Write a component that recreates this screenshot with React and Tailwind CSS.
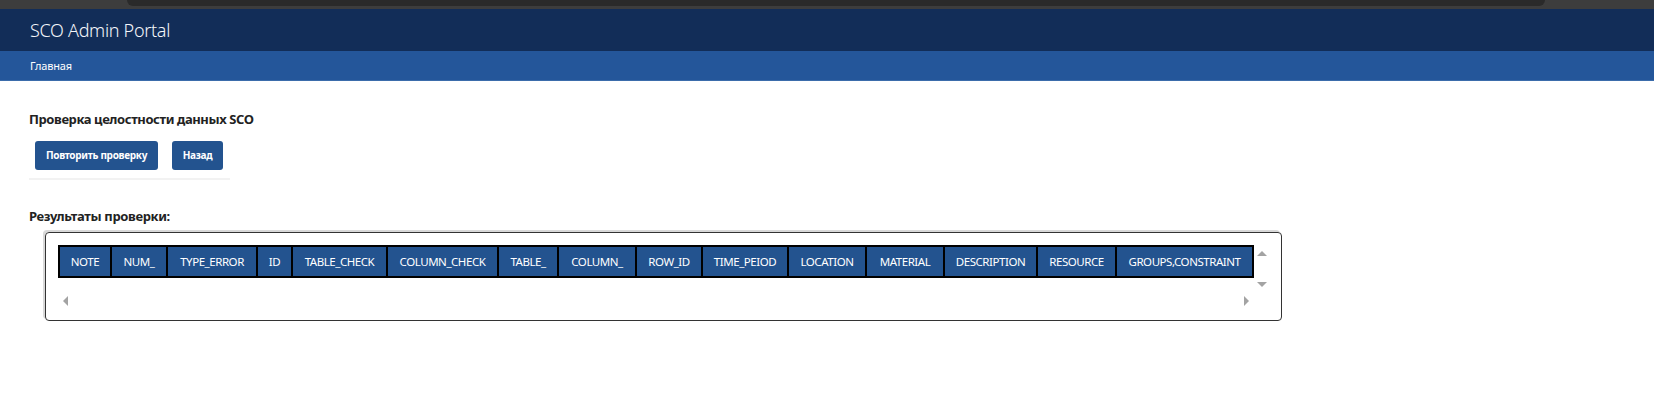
import React from "react";

const cols = [
  ["NOTE", 52],
  ["NUM_", 56],
  ["TYPE_ERROR", 90],
  ["ID", 35],
  ["TABLE_CHECK", 95],
  ["COLUMN_CHECK", 111],
  ["TABLE_", 60],
  ["COLUMN_", 78],
  ["ROW_ID", 66],
  ["TIME_PEIOD", 86],
  ["LOCATION", 78],
  ["MATERIAL", 78],
  ["DESCRIPTION", 93],
  ["RESOURCE", 79],
  ["GROUPS,CONSTRAINT", 137],
];

export default function App() {
  return (
    <div className="w-[1654px] h-[406px] bg-white overflow-hidden" style={{ fontFamily: '"Noto Sans", "Open Sans", sans-serif' }}>
      {/* top strip */}
      <div className="h-[9px] bg-[#3d3d3d] flex">
        <div className="ml-[127px] w-[1418px] h-[6px] bg-[#2a2a2a] rounded-b-md" />
      </div>
      {/* header */}
      <div className="h-[42px] bg-[#122d58] flex items-center pl-[30px]">
        <span className="text-[#f4f6fa] text-[18px] font-light leading-none tracking-[-0.3px]">SCO Admin Portal</span>
      </div>
      <div className="h-[30px] bg-[#24569a] border-b border-[#3b6cab] flex items-center pl-[30px]">
        <span className="text-white text-[11px] leading-none tracking-[-0.2px]">Главная</span>
      </div>

      <div className="pl-[29px] pt-[29px]">
        <h2 className="text-[13px] font-bold text-[#222] leading-[18px] tracking-[-0.4px]">Проверка целостности данных SCO</h2>
        <div className="mt-[13px] w-[201px] pl-[6px] pb-[8px] border-b-2 border-[#f2f2f2] flex gap-[14px]">
          <button className="h-[29px] w-[123px] rounded-[3px] bg-[#23538f] text-white text-[10px] font-bold tracking-[-0.3px]">Повторить проверку</button>
          <button className="h-[29px] w-[51px] rounded-[3px] bg-[#23538f] text-white text-[10px] font-bold tracking-[-0.3px]">Назад</button>
        </div>
        <h3 className="mt-[27px] text-[13px] font-bold text-[#222] leading-[18px] tracking-[-0.35px]">Результаты проверки:</h3>
      </div>

      <div className="ml-[45px] mt-[7px] w-[1237px] h-[89px] border-[1.5px] border-[#333] rounded-[4px] shadow-[-2px_-2px_0_0_#d8d8d8] pt-[12px] pl-[12px]">
        <div className="flex">
          <div className="w-[1196px]">
            <div className="flex h-[33px] border-2 border-r-0 border-black bg-[#23538f]">
              {cols.map(([name, w]) => (
                <div
                  key={name}
                  className="shrink-0 border-r-2 border-black flex items-center justify-center text-white text-[11.5px] tracking-[-0.45px] whitespace-nowrap"
                  style={{ width: w }}
                >
                  {name}
                </div>
              ))}
            </div>
          </div>
          <div className="w-[16px] h-[47px] flex flex-col items-center justify-between pt-[6px] pb-[5px]">
            <div className="w-0 h-0 border-l-[5px] border-r-[5px] border-b-[5px] border-l-transparent border-r-transparent border-b-[#a3a3a3]" />
            <div className="w-0 h-0 border-l-[5px] border-r-[5px] border-t-[5px] border-l-transparent border-r-transparent border-t-[#a3a3a3]" />
          </div>
        </div>
        <div className="w-[1196px] h-[17px] flex items-center justify-between px-[5px]">
          <div className="w-0 h-0 border-t-[5px] border-b-[5px] border-r-[5px] border-t-transparent border-b-transparent border-r-[#a3a3a3]" />
          <div className="w-0 h-0 border-t-[5px] border-b-[5px] border-l-[5px] border-t-transparent border-b-transparent border-l-[#a3a3a3]" />
        </div>
      </div>
    </div>
  );
}
